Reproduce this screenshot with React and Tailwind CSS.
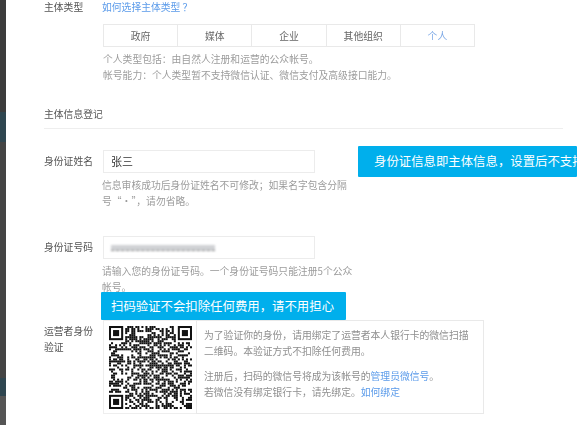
import React from 'react';

const types = ['政府', '媒体', '企业', '其他组织', '个人'];

// 二维码：定位点 + 伪随机模块
const QrCode = () => {
  const size = 41;
  const cells = [];
  const inFinder = (x, y) =>
    (x < 8 && y < 8) || (x >= size - 8 && y < 8) || (x < 8 && y >= size - 8);
  for (let y = 0; y < size; y++) {
    for (let x = 0; x < size; x++) {
      if (inFinder(x, y)) continue;
      const h = Math.sin(x * 12.9898 + y * 78.233) * 43758.5453;
      if (h - Math.floor(h) > 0.5) cells.push(<rect key={`${x}-${y}`} x={x} y={y} width="1" height="1" />);
    }
  }
  const finder = (x, y) => (
    <g key={`f${x}-${y}`}>
      <rect x={x} y={y} width="7" height="7" />
      <rect x={x + 1} y={y + 1} width="5" height="5" fill="#fff" />
      <rect x={x + 2} y={y + 2} width="3" height="3" />
    </g>
  );
  return (
    <svg viewBox={`0 0 ${size} ${size}`} className="w-[83px] h-[83px]" fill="#111">
      {cells}
      {finder(0, 0)}
      {finder(size - 7, 0)}
      {finder(0, size - 7)}
    </svg>
  );
};

const Row = ({ label, children }) => (
  <div className="flex">
    <div className="w-[58px] shrink-0 text-[#555] text-[9.8px] leading-[16px] pr-[2px]">{label}</div>
    <div className="flex-1 min-w-0">{children}</div>
  </div>
);

const Help = ({ children, className = '' }) => (
  <p className={`text-[#9c9c9c] text-[9.8px] leading-[16px] ${className}`}>{children}</p>
);

const Callout = ({ children, className = '' }) => (
  <div className={`absolute bg-[#00afec] text-white text-[12.4px] whitespace-nowrap overflow-hidden rounded-[1px] flex items-center ${className}`}>
    {children}
  </div>
);

export default function App() {
  return (
    <div className="relative w-[577px] h-[425px] overflow-hidden bg-white flex font-['Noto_Sans_CJK_SC',sans-serif]">
      <div className="w-[6px] shrink-0 flex flex-col">
        <div className="h-[112px] bg-[#3c3c3c]" />
        <div className="h-[30px] bg-[#2f4650]" />
        <div className="h-[236px] bg-[#444444]" />
        <div className="h-[18px] bg-[#2f4650]" />
        <div className="flex-1 bg-[#555555]" />
      </div>

      <div className="flex-1 pl-[38px] pr-[14px] blur-[0.4px] -mt-[1px]">
        <Row label="主体类型">
          <a className="text-[#5b9bea] text-[9.8px] leading-[16px] block">如何选择主体类型 ？</a>
        </Row>

        <div className="flex mt-[9px] ml-[59px] w-[372px] h-[23px] border border-[#e9e9e9]">
          {types.map((t, i) => (
            <div
              key={t}
              className={`flex-1 flex items-center justify-center pt-[1px] text-[9.8px] border-[#e9e9e9] ${i > 0 ? 'border-l' : ''} ${t === '个人' ? 'text-[#7aa7e6]' : 'text-[#666]'}`}
            >
              {t}
            </div>
          ))}
        </div>

        <div className="ml-[59px] mt-[4px]">
          <Help>个人类型包括：由自然人注册和运营的公众帐号。</Help>
          <Help>帐号能力：个人类型暂不支持微信认证、微信支付及高级接口能力。</Help>
        </div>

        <div className="mt-[23px] pb-[6px] border-b border-[#eeeeee] text-[#555] text-[9.8px] leading-[16px]">
          主体信息登记
        </div>

        <div className="mt-[21px]">
          <Row label={<span className="block pt-[3px]">身份证姓名</span>}>
            <div className="w-[212px] h-[23px] ml-[1px] border border-[#ececec] flex items-center pl-[7px] text-[#333] text-[11px]">
              张三
            </div>
            <Help className="w-[254px] mt-[4px]">信息审核成功后身份证姓名不可修改；如果名字包含分隔<br />号“·”，请勿省略。</Help>
          </Row>
        </div>

        <div className="mt-[27px]">
          <Row label={<span className="block pt-[3px]">身份证号码</span>}>
            <div className="w-[212px] h-[23px] ml-[1px] border border-[#ececec] flex items-center pl-[7px]">
              <span className="w-[104px] h-[6px] bg-[#d0d2d5] border-b border-dashed border-[#888] blur-[1px]" />
            </div>
            <Help className="w-[254px] mt-[4px]">请输入您的身份证号码。一个身份证号码只能注册5个公众<br />帐号。</Help>
          </Row>
        </div>

        <div className="mt-[25px]">
          <Row label={<span className="block pt-[3px]">运营者身份验证</span>}>
            <div className="flex ml-[1px] w-[381px] h-[94px]">
              <div className="w-[93px] shrink-0 flex items-center justify-center border-y border-l border-[#eeeeee]">
                <QrCode />
              </div>
              <div className="flex-1 border border-[#e9e9e9] pl-[7px] pr-[10px] pt-[6px] text-[#8f8f8f] text-[9.8px] leading-[16px]">
                <p>为了验证你的身份，请用绑定了运营者本人银行卡的微信扫描<br />二维码。本验证方式不扣除任何费用。</p>
                <p className="mt-[9px]">
                  注册后，扫码的微信号将成为该帐号的<a className="text-[#5b9bea]">管理员微信号</a>。
                </p>
                <p>
                  若微信没有绑定银行卡，请先绑定。<a className="text-[#5b9bea]">如何绑定</a>
                </p>
              </div>
            </div>
          </Row>
        </div>
      </div>

      <Callout className="left-[358px] top-[146px] w-[219px] h-[31px] pl-[16px]">身份证信息即主体信息，设置后不支持修改</Callout>
      <Callout className="left-[101px] top-[292px] w-[245px] h-[28px] pl-[10px]">扫码验证不会扣除任何费用，请不用担心</Callout>
    </div>
  );
}
